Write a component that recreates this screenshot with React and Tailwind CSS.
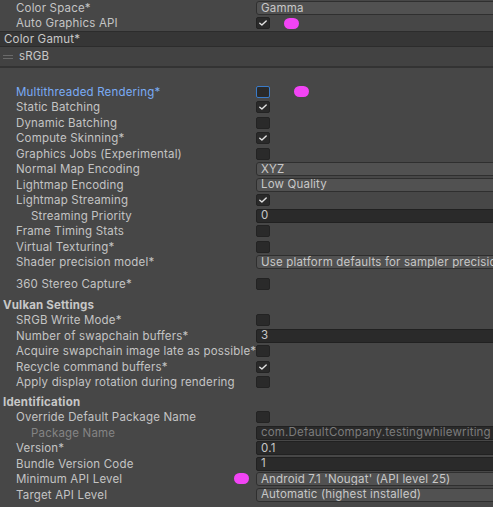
import React from 'react';

const Check = ({ checked, focused }) => (
  <div
    className={`w-[14px] h-[12px] rounded-[2px] bg-[#2a2a2a] border flex items-center justify-center ${
      focused ? 'border-[#3a7bc8]' : 'border-[#232323]'
    }`}
  >
    {checked && (
      <svg width="8" height="6" viewBox="0 0 8 6" fill="none">
        <path d="M0.8 3.2 L2.9 5 L7.2 0.9" stroke="#e2e2e2" strokeWidth="1.4" strokeLinecap="round" strokeLinejoin="round" />
      </svg>
    )}
  </div>
);

const Dropdown = ({ value }) => (
  <div className="w-[260px] h-[14px] rounded-[3px] bg-[#515151] border border-[#2f2f2f] flex items-center pl-[4px] pt-[1px] text-[#c8c8c8] whitespace-nowrap overflow-hidden">
    {value}
  </div>
);

const Field = ({ value, disabled }) => (
  <div
    className={`w-[260px] h-[14px] rounded-[2px] bg-[#2a2a2a] border border-[#212121] flex items-center pl-[4px] pt-[1px] whitespace-nowrap overflow-hidden ${
      disabled ? 'text-[#7c7c7c]' : 'text-[#c8c8c8]'
    }`}
  >
    {value}
  </div>
);

const Row = ({ label, indent, blue, dim, children }) => (
  <div className="h-[15.5px] flex items-center">
    <div
      className={`w-[256px] shrink-0 whitespace-nowrap pt-[1.5px] ${indent ? 'pl-[31px]' : 'pl-[16px]'} ${
        blue ? 'text-[#7aabf5]' : dim ? 'text-[#848484]' : 'text-[#c4c4c4]'
      }`}
    >
      {label}
    </div>
    <div className="relative z-10 flex items-center">{children}</div>
  </div>
);

const Header = ({ title }) => (
  <div className="h-[15.5px] flex items-center pl-[3px] pt-[3px] font-bold text-[#c8c8c8]">{title}</div>
);

const Dot = ({ className }) => (
  <div className={`absolute w-[15px] h-[11px] rounded-full bg-[#f244f5] z-20 ${className}`} />
);

export default function App() {
  return (
    <div
      className="relative w-[493px] h-[507px] overflow-hidden bg-[#474747] text-[11.5px] leading-none tracking-[0.18px]"
      style={{ fontFamily: 'Inter, "Noto Sans", sans-serif' }}
    >
      <Row label="Color Space*">
        <Dropdown value="Gamma" />
      </Row>
      <Row label="Auto Graphics API">
        <Check checked />
      </Row>

      {/* Color Gamut list */}
      <div className="h-[16px] bg-[#363636] border-y border-[#2c2c2c] flex items-center pl-[4px] pt-[1px] text-[#c8c8c8]">
        Color Gamut*
      </div>
      <div className="h-[19px] bg-[#424242] flex items-center text-[#c8c8c8]">
        <div className="w-[10px] ml-[3px] mr-[6px] flex flex-col gap-[2px]">
          <div className="h-[1px] bg-[#6a6a6a]" />
          <div className="h-[1px] bg-[#6a6a6a]" />
        </div>
        <span className="pt-[1px]">sRGB</span>
      </div>
      <div className="h-[2px] bg-[#333333]" />
      <div className="h-[15.75px]" />

      <Row label="Multithreaded Rendering*" blue>
        <Check focused />
      </Row>
      <Row label="Static Batching">
        <Check checked />
      </Row>
      <Row label="Dynamic Batching">
        <Check />
      </Row>
      <Row label="Compute Skinning*">
        <Check checked />
      </Row>
      <Row label="Graphics Jobs (Experimental)">
        <Check />
      </Row>
      <Row label="Normal Map Encoding">
        <Dropdown value="XYZ" />
      </Row>
      <Row label="Lightmap Encoding">
        <Dropdown value="Low Quality" />
      </Row>
      <Row label="Lightmap Streaming">
        <Check checked />
      </Row>
      <Row label="Streaming Priority" indent>
        <Field value="0" />
      </Row>
      <Row label="Frame Timing Stats">
        <Check />
      </Row>
      <Row label="Virtual Texturing*">
        <Check />
      </Row>
      <Row label="Shader precision model*">
        <Dropdown value="Use platform defaults for sampler precision" />
      </Row>
      <div className="h-[6.5px]" />
      <Row label="360 Stereo Capture*">
        <Check />
      </Row>

      <div className="h-[5px]" />
      <Header title="Vulkan Settings" />
      <Row label="SRGB Write Mode*">
        <Check />
      </Row>
      <Row label="Number of swapchain buffers*">
        <Field value="3" />
      </Row>
      <Row label="Acquire swapchain image late as possible*">
        <Check />
      </Row>
      <Row label="Recycle command buffers*">
        <Check checked />
      </Row>
      <Row label="Apply display rotation during rendering">
        <Check />
      </Row>

      <div className="h-[4px]" />
      <Header title="Identification" />
      <Row label="Override Default Package Name">
        <Check />
      </Row>
      <Row label="Package Name" indent dim>
        <Field value="com.DefaultCompany.testingwhilewriting" disabled />
      </Row>
      <Row label="Version*">
        <Field value="0.1" />
      </Row>
      <Row label="Bundle Version Code">
        <Field value="1" />
      </Row>
      <Row label="Minimum API Level">
        <Dropdown value="Android 7.1 'Nougat' (API level 25)" />
      </Row>
      <Row label="Target API Level">
        <Dropdown value="Automatic (highest installed)" />
      </Row>

      <Dot className="left-[284px] top-[18px]" />
      <Dot className="left-[294px] top-[86px]" />
      <Dot className="left-[234px] top-[473px]" />
    </div>
  );
}
